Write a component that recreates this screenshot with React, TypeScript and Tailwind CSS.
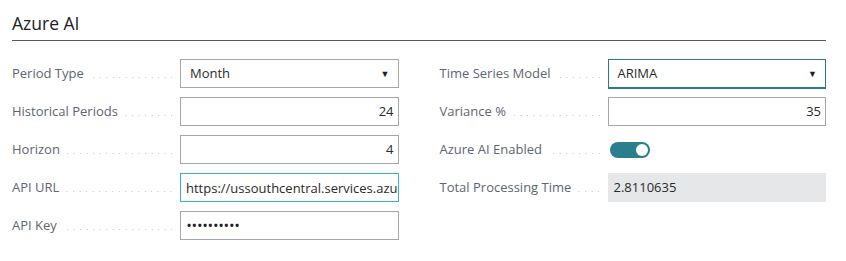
import React from "react";

const font = { fontFamily: '"Segoe UI", "Open Sans", "Noto Sans", sans-serif' };

function Leader() {
  return (
    <div className="flex-1 min-w-0 ml-[6px] mr-[8px] h-[2px] mt-[8px] bg-[linear-gradient(to_left,#bfc2c6_1px,transparent_1px)] bg-size-[6.5px_1px] bg-repeat-x bg-right" />
  );
}

function Row({ label, children }: { label: string; children: React.ReactNode }) {
  return (
    <div className="flex items-center h-[29px]">
      <div className="w-[168px] shrink-0 flex items-center">
        <span className="text-[13px] font-normal text-[#5d6572] whitespace-nowrap">{label}</span>
        <Leader />
      </div>
      <div className="flex-1 min-w-0 h-full">{children}</div>
    </div>
  );
}

function Select({ value, focused }: { value: string; focused?: boolean }) {
  return (
    <div
      className={
        focused
          ? "h-full flex items-center justify-between border border-[#2b7b80] shadow-[0_1px_0_#2b7b80] pl-[9px] pr-[8px] bg-white"
          : "h-full flex items-center justify-between border border-[#a6a6a6] pl-[9px] pr-[8px] bg-white"
      }
    >
      <span className="text-[13px] font-normal text-[#2a2a2a]">{value}</span>
      <span className="text-[9px] text-[#212121]">▼</span>
    </div>
  );
}

function NumInput({ value }: { value: string }) {
  return (
    <div className="h-full flex items-center justify-end border border-[#a6a6a6] pl-[5px] pr-[4px] bg-white">
      <span className="text-[13px] font-normal text-[#2a2a2a]">{value}</span>
    </div>
  );
}

export default function App() {
  return (
    <div className="w-[846px] h-[261px] bg-white" style={font}>
      <div className="pl-[12px] pr-[20px] pt-[11px]">
        <div className="h-[30px] border-b border-[#535a63]">
          <span className="text-[17.5px] font-medium text-[#212121] leading-[24px]">Azure AI</span>
        </div>
        <div className="grid grid-cols-2 gap-x-[41px] mt-[18px]">
          <div className="flex flex-col gap-[9px] min-w-0">
            <Row label="Period Type">
              <Select value="Month" />
            </Row>
            <Row label="Historical Periods">
              <NumInput value="24" />
            </Row>
            <Row label="Horizon">
              <NumInput value="4" />
            </Row>
            <Row label="API URL">
              <input
                readOnly
                value="https://ussouthcentral.services.azureml.net/workspaces"
                className="w-full h-full border border-[#35b5c1] pl-[5px] bg-white text-[13px] text-[#2a2a2a] outline-none"
                style={font}
              />
            </Row>
            <Row label="API Key">
              <div className="h-full flex items-center border border-[#a6a6a6] pl-[6px] bg-white">
                <span className="text-[11px] text-[#212121] tracking-[1.2px] font-bold">••••••••••</span>
              </div>
            </Row>
          </div>
          <div className="flex flex-col gap-[9px] min-w-0">
            <Row label="Time Series Model">
              <Select value="ARIMA" focused />
            </Row>
            <Row label="Variance %">
              <NumInput value="35" />
            </Row>
            <Row label="Azure AI Enabled">
              <div className="h-full flex items-center pl-[2px]">
                <div className="w-[40px] h-[16px] rounded-full bg-[#2b7f8c] flex items-center justify-end pr-[2px]">
                  <div className="w-[12px] h-[12px] rounded-full bg-white" />
                </div>
              </div>
            </Row>
            <Row label="Total Processing Time">
              <div className="h-full flex items-center bg-[#e6e7e9] pl-[6px]">
                <span className="text-[13px] font-normal text-[#2a2a2a]">2.8110635</span>
              </div>
            </Row>
          </div>
        </div>
      </div>
    </div>
  );
}
